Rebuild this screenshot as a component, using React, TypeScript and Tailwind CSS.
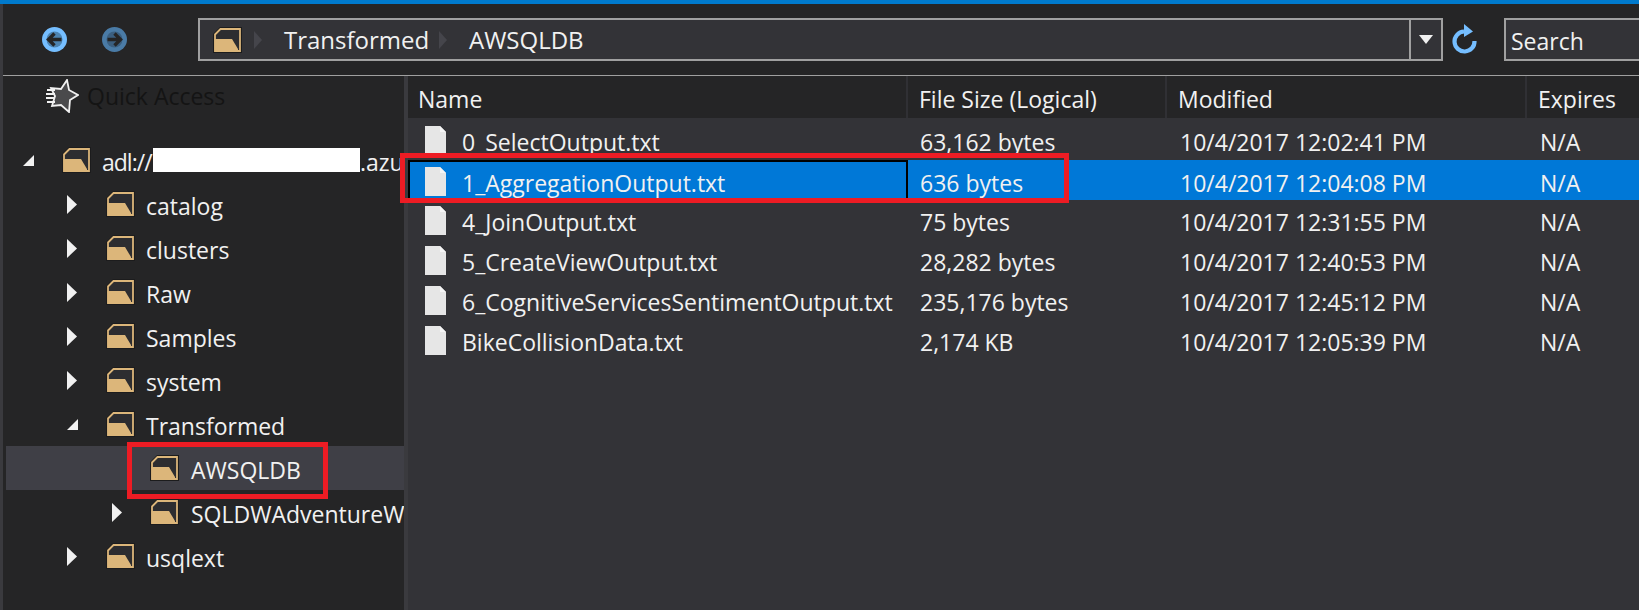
const font = "font-['Open_Sans','Noto_Sans',sans-serif]";

type TreeRow = {
  name: string;
  rowClass: string;
  arrowClass: string;
  folderClass: string;
  open?: boolean;
  noArrow?: boolean;
  active?: boolean;
};

const treeRows: TreeRow[] = [
  { name: "catalog", rowClass: "pl-[61px]", arrowClass: "w-[39px]", folderClass: "w-[40px]" },
  { name: "clusters", rowClass: "pl-[61px]", arrowClass: "w-[39px]", folderClass: "w-[40px]" },
  { name: "Raw", rowClass: "pl-[61px]", arrowClass: "w-[39px]", folderClass: "w-[40px]" },
  { name: "Samples", rowClass: "pl-[61px]", arrowClass: "w-[39px]", folderClass: "w-[40px]" },
  { name: "system", rowClass: "pl-[61px]", arrowClass: "w-[39px]", folderClass: "w-[40px]" },
  { name: "Transformed", rowClass: "pl-[61px]", arrowClass: "w-[39px]", folderClass: "w-[40px]", open: true },
  { name: "AWSQLDB", rowClass: "pl-[106px]", arrowClass: "w-[38px]", folderClass: "w-[41px]", noArrow: true, active: true },
  { name: "SQLDWAdventureWorks", rowClass: "pl-[106px]", arrowClass: "w-[38px]", folderClass: "w-[41px]" },
  { name: "usqlext", rowClass: "pl-[61px]", arrowClass: "w-[39px]", folderClass: "w-[40px]" },
];

const files = [
  { name: "0_SelectOutput.txt", size: "63,162 bytes", modified: "10/4/2017 12:02:41 PM" },
  { name: "1_AggregationOutput.txt", size: "636 bytes", modified: "10/4/2017 12:04:08 PM", selected: true },
  { name: "4_JoinOutput.txt", size: "75 bytes", modified: "10/4/2017 12:31:55 PM" },
  { name: "5_CreateViewOutput.txt", size: "28,282 bytes", modified: "10/4/2017 12:40:53 PM" },
  { name: "6_CognitiveServicesSentimentOutput.txt", size: "235,176 bytes", modified: "10/4/2017 12:45:12 PM" },
  { name: "BikeCollisionData.txt", size: "2,174 KB", modified: "10/4/2017 12:05:39 PM" },
];

function FolderIcon() {
  return (
    <svg width="29" height="26" viewBox="0 0 29 26" className="shrink-0">
      <path d="M0 7 L7 0 H29 V26 H0 Z" fill="#1c1c1d" />
      <path d="M2 7.5 L7.5 2 H27 V24 H2 Z" fill="#2d2d30" stroke="#dcb67a" strokeWidth="1.8" />
      <path d="M1.5 12 H19 L25 22 V24.5 H1.5 Z" fill="#dcb67a" />
    </svg>
  );
}

function FileIcon() {
  return (
    <svg width="21" height="29" viewBox="0 0 21 29" className="shrink-0">
      <path d="M0 0 H15 L21 6 V29 H0 Z" fill="#e6e6e6" />
      <path d="M15 0 L21 6 H15 Z" fill="#f6f6f6" />
    </svg>
  );
}

function NavButton({ dim, flip }: { dim?: boolean; flip?: boolean }) {
  return (
    <svg width="25" height="25" viewBox="0 0 25 25" className="shrink-0">
      <circle cx="12.5" cy="12.5" r="12.5" fill={dim ? "#4a7ba6" : "#75beff"} />
      <circle cx="12.5" cy="12.5" r="8" fill={dim ? "#3b5f80" : "#4d83b0"} />
      <path
        d={flip ? "M5.5 12.5 H18 M12.5 6.5 L18.5 12.5 L12.5 18.5" : "M19.5 12.5 H7 M12.5 6.5 L6.5 12.5 L12.5 18.5"}
        fill="none"
        stroke="#252526"
        strokeWidth="3.4"
      />
    </svg>
  );
}

function StarIcon() {
  return (
    <svg width="33" height="34" viewBox="0 0 33 34" className="shrink-0">
      <path
        d="M21 1 L23 11 L32 16 L24 21 L23 33 L15 26 L6 27 L9 17 L5 9 L15 10 Z"
        fill="#4a4a4c"
        stroke="#f1f1f1"
        strokeWidth="1.8"
      />
      <path d="M1 11 H9 M0 15 H9 M0 19 H9 M1 23 H9" stroke="#f1f1f1" strokeWidth="2" />
    </svg>
  );
}

function RefreshIcon() {
  return (
    <svg width="25" height="31" viewBox="0 0 25 31" className="shrink-0">
      <path d="M22.5 17 A10 10 0 1 1 12 7.5" fill="none" stroke="#75beff" strokeWidth="4.2" />
      <path d="M12 0 L21 7.5 L12 13 Z" fill="#75beff" />
    </svg>
  );
}

function Crumb() {
  return (
    <svg width="8" height="18" viewBox="0 0 8 18" className="shrink-0">
      <path d="M0 0 L8 9 L0 18 Z" fill="#45454b" />
    </svg>
  );
}

function Arrow({ open }: { open?: boolean }) {
  if (open) {
    return (
      <svg width="11" height="11" viewBox="0 0 11 11">
        <path d="M11 0 V11 H0 Z" fill="#f1f1f1" />
      </svg>
    );
  }
  return (
    <svg width="10" height="19" viewBox="0 0 10 19">
      <path d="M0 0 L10 9.5 L0 19 Z" fill="#f1f1f1" />
    </svg>
  );
}

function HeaderCell({ label, className }: { label: string; className: string }) {
  return (
    <div className={`flex items-center border-r-2 border-[#303034] pt-1 ${className}`}>{label}</div>
  );
}

export default function App() {
  return (
    <div className={`relative flex h-[610px] w-[1639px] flex-col overflow-hidden bg-[#252526] text-[23px] text-[#f1f1f1] ${font}`}>
      <div className="h-1 shrink-0 bg-[#007acc]" />

      <div className="flex min-h-0 flex-1 flex-col border-l-[3px] border-[#3a3a3e]">
        <div className="flex h-[72px] shrink-0 items-center border-b border-[#a0a0a0]">
          <div className="ml-[39px]">
            <NavButton />
          </div>
          <div className="ml-[35px]">
            <NavButton dim flip />
          </div>
          <div className="ml-[71px] flex h-[43px] w-[1245px] shrink-0 items-center border-2 border-[#a0a0a0] bg-[#333337] text-[24px]">
            <div className="ml-[13px]">
              <FolderIcon />
            </div>
            <div className="ml-[12px]">
              <Crumb />
            </div>
            <span className="ml-[22px] w-[155px]">Transformed</span>
            <Crumb />
            <span className="ml-[22px]">AWSQLDB</span>
            <div className="ml-auto flex h-full w-[32px] items-center justify-center border-l-2 border-[#a0a0a0]">
              <svg width="14" height="9" viewBox="0 0 14 9">
                <path d="M0 0 H14 L7 9 Z" fill="#f1f1f1" />
              </svg>
            </div>
          </div>
          <div className="ml-[9px]">
            <RefreshIcon />
          </div>
          <div className="ml-[27px] flex h-[43px] min-w-0 flex-1 items-center border-y-2 border-l-2 border-[#a0a0a0] bg-[#333337] pl-[5px] pt-1">
            Search
          </div>
        </div>

        <div className="flex min-h-0 flex-1">
          <div className="w-[401px] shrink-0 overflow-hidden pl-[3px]">
            <div className="flex h-10 items-center pl-[40px]">
              <StarIcon />
              <span className="ml-[8px] text-[#141414]">Quick Access</span>
            </div>
            <div className="mt-[22px] flex h-11 items-center pl-[17px]">
              <div className="w-[39px] shrink-0">
                <Arrow open />
              </div>
              <div className="w-[40px] shrink-0">
                <FolderIcon />
              </div>
              <span className="w-[51px] shrink-0 whitespace-nowrap pt-1 tracking-[-1px]">adl://</span>
              <span className="h-6 w-[207px] shrink-0 bg-white" />
              <span className="whitespace-nowrap pt-1">.azuredatalakestore.net</span>
            </div>
            {treeRows.map((row) => (
              <div
                key={row.name}
                className={`flex h-11 items-center whitespace-nowrap ${row.rowClass} ${row.active ? "bg-[#3f3f46]" : ""}`}
              >
                <div className={`shrink-0 ${row.arrowClass}`}>{row.noArrow ? null : <Arrow open={row.open} />}</div>
                <div className={`shrink-0 ${row.folderClass}`}>
                  <FolderIcon />
                </div>
                <span className="pt-1">{row.name}</span>
              </div>
            ))}
          </div>

          <div className="w-1 shrink-0 bg-[#3a3a3e]" />

          <div className="min-w-0 flex-1 bg-[#333337]">
            <div className="grid h-[42px] grid-cols-[500px_259px_360px_1fr] bg-[#252526]">
              <HeaderCell label="Name" className="pl-[10px]" />
              <HeaderCell label="File Size (Logical)" className="pl-[11px]" />
              <HeaderCell label="Modified" className="pl-[11px]" />
              <div className="flex items-center pl-[11px] pt-1">Expires</div>
            </div>
            <div className="pt-[2px]">
              {files.map((file) => (
                <div
                  key={file.name}
                  className={`grid h-10 grid-cols-[500px_259px_360px_1fr] items-center ${file.selected ? "bg-[#0078d7]" : ""}`}
                >
                  <div
                    className={`flex h-full items-center whitespace-nowrap ${file.selected ? "border-2 border-black pl-[15px]" : "pl-[17px]"}`}
                  >
                    <FileIcon />
                    <span className="ml-[16px] pt-1">{file.name}</span>
                  </div>
                  <div className="pl-[12px] pt-1">{file.size}</div>
                  <div className="pl-[13px] pt-1">{file.modified}</div>
                  <div className="pl-[13px] pt-1">N/A</div>
                </div>
              ))}
            </div>
          </div>
        </div>
      </div>

      {/* red annotation boxes drawn over the screenshot */}
      <div className="absolute left-[400px] top-[153px] h-[50px] w-[669px] border-[5px] border-[#ed1c24]" />
      <div className="absolute left-[127px] top-[442px] h-[57px] w-[201px] border-[5px] border-[#ed1c24]" />
    </div>
  );
}
